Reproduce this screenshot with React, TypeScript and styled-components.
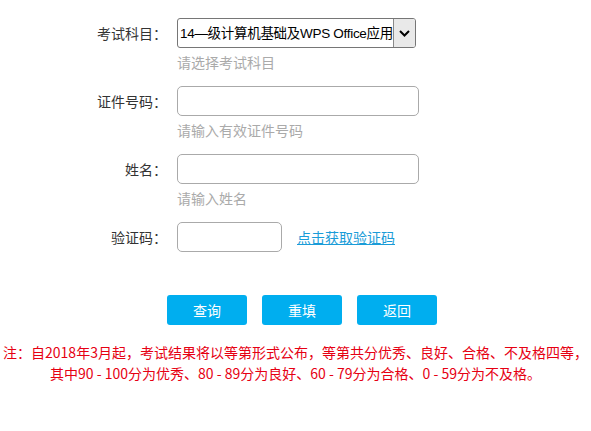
import React from "react";
import styled, { createGlobalStyle } from "styled-components";

const GlobalStyle = createGlobalStyle`
  body {
    margin: 0;
    background: #fff;
    font-family: "Noto Sans CJK SC", "Noto Sans", sans-serif;
    font-size: 14px;
    color: #333;
  }
`;

const Page = styled.div`
  padding-top: 18px;
`;

const Row = styled.div`
  display: grid;
  grid-template-columns: 167px 1fr;
  column-gap: 10px;
  margin-bottom: 14px;
`;

const Label = styled.label`
  text-align: right;
  line-height: 30px;
  font-size: 14px;
  color: #333;
  white-space: nowrap;
`;

const Field = styled.div`
  display: flex;
  flex-direction: column;
  align-items: flex-start;
`;

const Inline = styled.div`
  display: flex;
  align-items: center;
  gap: 15px;
`;

const Hint = styled.div`
  margin-top: 4px;
  line-height: 20px;
  font-size: 14px;
  color: #aaa;
`;

const SelectBox = styled.div`
  display: flex;
  width: 239px;
  height: 30px;
  box-sizing: border-box;
  border: 1px solid #767676;
  border-radius: 3px;
  overflow: hidden;
  background: #fff;
`;

const Select = styled.select`
  appearance: none;
  flex: 1;
  min-width: 0;
  border: none;
  outline: none;
  background: transparent;
  padding: 0 0 0 2px;
  font-family: "Liberation Sans", "Noto Sans CJK SC", sans-serif;
  font-size: 13.5px;
  letter-spacing: -0.3px;
  color: #000;
`;

const Arrow = styled.div`
  width: 21px;
  display: flex;
  align-items: center;
  justify-content: center;
  background: #e9e9e9;
  border-left: 1px solid #8a8a8a;
`;

const Input = styled.input<{ $width?: number }>`
  width: ${(p) => p.$width ?? 242}px;
  height: 30px;
  box-sizing: border-box;
  border: 1px solid #aaa;
  border-radius: 5px;
  padding: 0 6px;
  font-family: inherit;
  font-size: 14px;
  outline: none;
`;

const CodeLink = styled.a`
  color: #1a9cd8;
  text-decoration: underline;
  font-size: 14px;
  line-height: 30px;
  cursor: pointer;
`;

const Buttons = styled.div`
  display: flex;
  gap: 15px;
  padding-left: 167px;
  margin-top: 43px;
`;

const Button = styled.button`
  width: 80px;
  height: 30px;
  border: none;
  border-radius: 3px;
  background: #00aeef;
  color: #fff;
  font-family: inherit;
  font-size: 14px;
  cursor: pointer;
`;

const Note = styled.p`
  margin: 17px 0 0;
  text-align: center;
  color: #e60012;
  font-size: 14px;
  line-height: 21px;
  white-space: nowrap;
`;

export default function App() {
  return (
    <Page>
      <GlobalStyle />
      <Row>
        <Label>考试科目：</Label>
        <Field>
          <SelectBox>
            <Select defaultValue="14">
              <option value="14">14—级计算机基础及WPS Office应用</option>
            </Select>
            <Arrow>
              <svg width="11" height="7" viewBox="0 0 11 7">
                <path d="M1 1 L5.5 5.5 L10 1" fill="none" stroke="#000" strokeWidth="2" />
              </svg>
            </Arrow>
          </SelectBox>
          <Hint>请选择考试科目</Hint>
        </Field>
      </Row>
      <Row>
        <Label>证件号码：</Label>
        <Field>
          <Input />
          <Hint>请输入有效证件号码</Hint>
        </Field>
      </Row>
      <Row>
        <Label>姓名：</Label>
        <Field>
          <Input />
          <Hint>请输入姓名</Hint>
        </Field>
      </Row>
      <Row>
        <Label>验证码：</Label>
        <Inline>
          <Input $width={105} />
          <CodeLink>点击获取验证码</CodeLink>
        </Inline>
      </Row>
      <Buttons>
        <Button>查询</Button>
        <Button>重填</Button>
        <Button>返回</Button>
      </Buttons>
      <Note>
        注：自2018年3月起，考试结果将以等第形式公布，等第共分优秀、良好、合格、不及格四等，
        <br />
        其中90 - 100分为优秀、80 - 89分为良好、60 - 79分为合格、0 - 59分为不及格。
      </Note>
    </Page>
  );
}
